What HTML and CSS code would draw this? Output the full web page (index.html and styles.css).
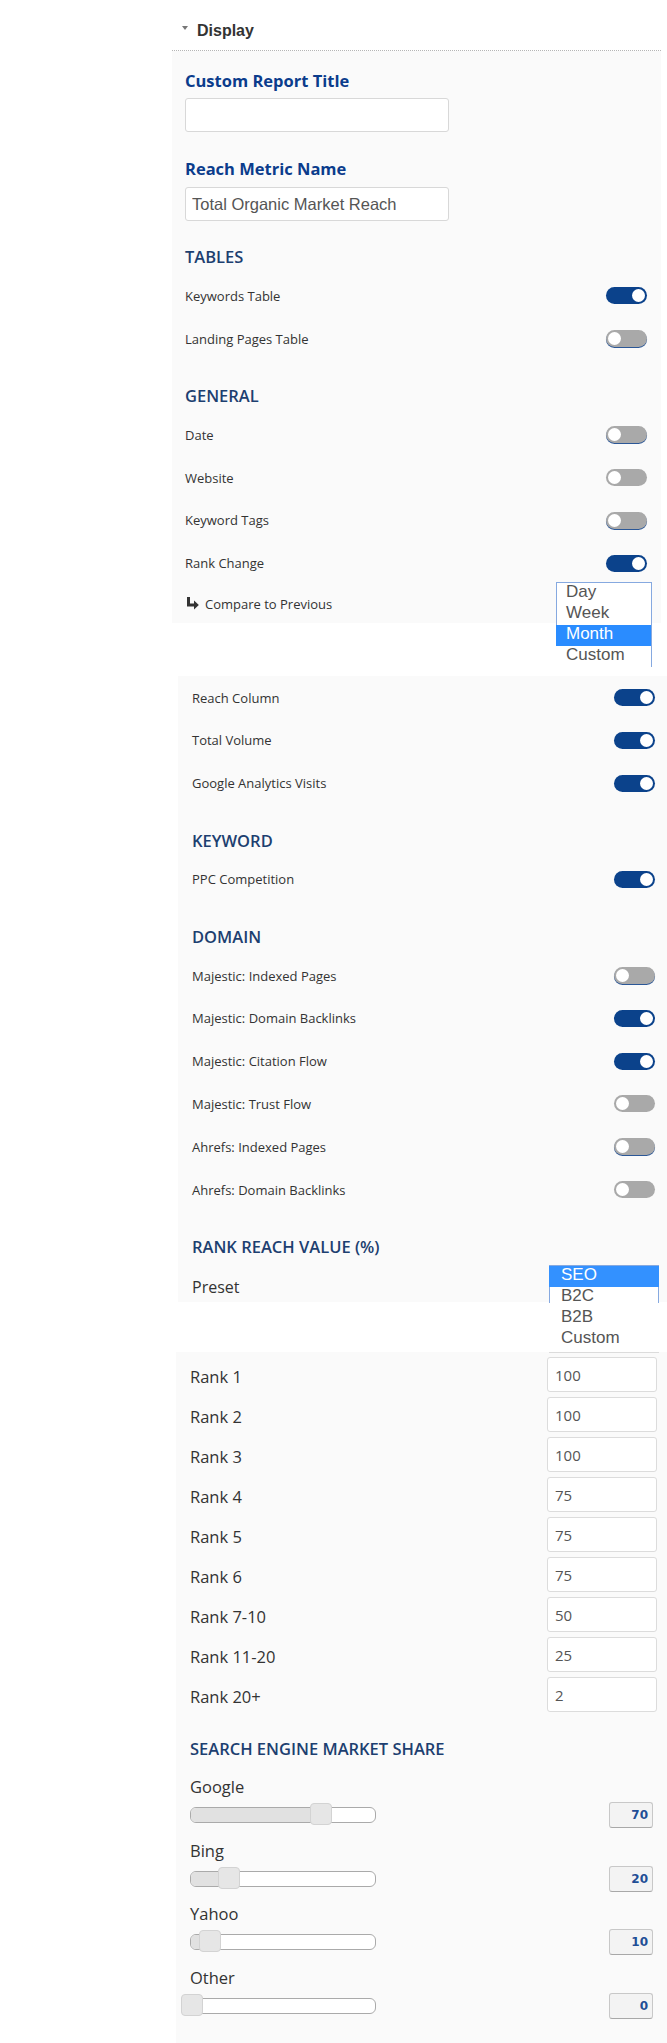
FILE: index.html
```html
<!DOCTYPE html>
<html lang="en">
<head>
  <meta charset="UTF-8">
  <title>Report Settings - Display</title>
  <meta name="viewport" content="width=device-width, initial-scale=1.0">
  <link rel="stylesheet" href="styles.css">
</head>
<body>

  <div class="display-head"><span class="caret"></span>Display</div>

  <div class="panel panel-top">
    <label class="field-label">Custom Report Title</label>
    <input class="text-input" type="text" value="">
    <label class="field-label second">Reach Metric Name</label>
    <input class="text-input" type="text" value="Total Organic Market Reach">

    <h3 class="group-title">TABLES</h3>
    <div class="opt-row"><span>Keywords Table</span><span class="toggle on"></span></div>
    <div class="opt-row"><span>Landing Pages Table</span><span class="toggle edge"></span></div>

    <h3 class="group-title">GENERAL</h3>
    <div class="opt-row"><span>Date</span><span class="toggle edge"></span></div>
    <div class="opt-row"><span>Website</span><span class="toggle"></span></div>
    <div class="opt-row"><span>Keyword Tags</span><span class="toggle edge"></span></div>
    <div class="opt-row"><span>Rank Change</span><span class="toggle on"></span></div>
    <div class="opt-row compare-row">
      <span class="sub-arrow">
        <svg width="13" height="13" viewBox="0 0 13 13">
          <path d="M2.5 0 V8 H8.5" fill="none" stroke="#333" stroke-width="3"/>
          <polygon points="8,3.5 12.8,8 8,12.5" fill="#333"/>
        </svg>
      </span>
      <span>Compare to Previous</span>
      <div class="listbox period-list">
        <div class="option">Day</div>
        <div class="option">Week</div>
        <div class="option selected">Month</div>
        <div class="option">Custom</div>
      </div>
    </div>
  </div>

  <div class="panel panel-mid">
    <div class="opt-row"><span>Reach Column</span><span class="toggle on"></span></div>
    <div class="opt-row"><span>Total Volume</span><span class="toggle on"></span></div>
    <div class="opt-row"><span>Google Analytics Visits</span><span class="toggle on"></span></div>

    <h3 class="group-title">KEYWORD</h3>
    <div class="opt-row"><span>PPC Competition</span><span class="toggle on"></span></div>

    <h3 class="group-title">DOMAIN</h3>
    <div class="opt-row"><span>Majestic: Indexed Pages</span><span class="toggle edge"></span></div>
    <div class="opt-row"><span>Majestic: Domain Backlinks</span><span class="toggle on"></span></div>
    <div class="opt-row"><span>Majestic: Citation Flow</span><span class="toggle on"></span></div>
    <div class="opt-row"><span>Majestic: Trust Flow</span><span class="toggle"></span></div>
    <div class="opt-row"><span>Ahrefs: Indexed Pages</span><span class="toggle edge"></span></div>
    <div class="opt-row"><span>Ahrefs: Domain Backlinks</span><span class="toggle"></span></div>

    <h3 class="group-title">RANK REACH VALUE (%)</h3>
    <div class="preset-row">
      <span>Preset</span>
      <div class="listbox preset-list">
        <div class="option selected">SEO</div>
        <div class="option">B2C</div>
        <div class="option">B2B</div>
        <div class="option">Custom</div>
      </div>
    </div>
  </div>

  <div class="panel panel-low">
    <div class="rank-row"><span class="rank-label">Rank 1</span><input class="rank-input" type="text" value="100"></div>
    <div class="rank-row"><span class="rank-label">Rank 2</span><input class="rank-input" type="text" value="100"></div>
    <div class="rank-row"><span class="rank-label">Rank 3</span><input class="rank-input" type="text" value="100"></div>
    <div class="rank-row"><span class="rank-label">Rank 4</span><input class="rank-input" type="text" value="75"></div>
    <div class="rank-row"><span class="rank-label">Rank 5</span><input class="rank-input" type="text" value="75"></div>
    <div class="rank-row"><span class="rank-label">Rank 6</span><input class="rank-input" type="text" value="75"></div>
    <div class="rank-row"><span class="rank-label">Rank 7-10</span><input class="rank-input" type="text" value="50"></div>
    <div class="rank-row"><span class="rank-label">Rank 11-20</span><input class="rank-input" type="text" value="25"></div>
    <div class="rank-row"><span class="rank-label">Rank 20+</span><input class="rank-input" type="text" value="2"></div>

    <h3 class="group-title share-title">SEARCH ENGINE MARKET SHARE</h3>

    <div class="share">
      <div class="share-label">Google</div>
      <div class="share-row">
        <div class="track"><div class="range" style="width:70%"></div><span class="handle" style="left:70%"></span></div>
        <div class="share-value">70</div>
      </div>
    </div>
    <div class="share">
      <div class="share-label">Bing</div>
      <div class="share-row">
        <div class="track"><div class="range" style="width:20%"></div><span class="handle" style="left:20%"></span></div>
        <div class="share-value">20</div>
      </div>
    </div>
    <div class="share">
      <div class="share-label">Yahoo</div>
      <div class="share-row">
        <div class="track"><div class="range" style="width:10%"></div><span class="handle" style="left:10%"></span></div>
        <div class="share-value">10</div>
      </div>
    </div>
    <div class="share">
      <div class="share-label">Other</div>
      <div class="share-row">
        <div class="track"><div class="range" style="width:0%"></div><span class="handle" style="left:0%"></span></div>
        <div class="share-value">0</div>
      </div>
    </div>
  </div>

</body>
</html>
```

FILE: styles.css
```css
body { margin: 0; background: #fff; font-family: "Open Sans", sans-serif; color: #333; }

.display-head {
  margin-left: 172px;
  width: 489px;
  height: 51px;
  box-sizing: border-box;
  padding: 22px 0 0 10px;
  border-bottom: 1px dotted #b5b5b5;
  font: bold 16px/18px "Liberation Sans", Arial, sans-serif;
  color: #333;
}
.caret {
  display: inline-block;
  width: 0;
  height: 0;
  border-left: 3.5px solid transparent;
  border-right: 3.5px solid transparent;
  border-top: 4px solid #777;
  margin-right: 9px;
  vertical-align: 6px;
}

.panel { background: #fafafa; box-sizing: border-box; }
.panel-top { margin-left: 172px; width: 489px; padding: 19px 14px 0 13px; }
.panel-mid { margin: 53px 0 0 178px; width: 489px; padding: 0 12px 4.5px 14px; }
.panel-low { margin: 50px 0 0 176px; width: 491px; padding: 5px 10px 25px 14px; }

.field-label {
  display: block;
  font-size: 16.5px;
  font-weight: 700;
  line-height: 22px;
  color: #0b3c8c;
  margin-bottom: 6px;
}
.field-label.second { margin-top: 26px; margin-bottom: 7px; }
.text-input {
  display: block;
  width: 264px;
  height: 34px;
  box-sizing: border-box;
  border: 1px solid #d8d8d8;
  border-radius: 3px;
  padding: 0 6px;
  background: #fff;
  font: 16.5px "Liberation Sans", Arial, sans-serif;
  color: #555;
}

.group-title {
  margin: 25px 0 6.4px;
  font-size: 16.5px;
  font-weight: 600;
  line-height: 22px;
  color: #1d3f70;
}

.opt-row {
  display: flex;
  justify-content: space-between;
  align-items: center;
  height: 42.8px;
  font-size: 13px;
  line-height: 18px;
}
.toggle {
  position: relative;
  width: 41px;
  height: 17px;
  border-radius: 9px;
  background: #a9a9a9;
}
.toggle::after {
  content: "";
  position: absolute;
  top: 2px;
  left: 2px;
  width: 13px;
  height: 13px;
  border-radius: 50%;
  background: #fff;
}
.toggle.on { background: #0b428b; }
.toggle.on::after { left: auto; right: 2px; }
.toggle.edge { box-shadow: 0 1px 0 #2b5797; }

.compare-row {
  position: relative;
  justify-content: flex-start;
  gap: 6px;
  height: 38.6px;
}
.sub-arrow { display: flex; margin-left: 1px; }

.listbox {
  position: absolute;
  z-index: 2;
  box-sizing: border-box;
  font: 17px/18px "Liberation Sans", Arial, sans-serif;
  color: #555;
}
.listbox .option { height: 21px; }
.listbox .option.selected { background: #2a8cff; color: #fff; }
.period-list {
  top: -3px;
  right: -5px;
  width: 96px;
  border-top: 1px solid #86a9e0;
  border-right: 1px solid #86a9e0;
  background: linear-gradient(#86a9e0, #86a9e0) left top / 1px 42px no-repeat, #fff;
}
.period-list .option { padding-left: 10px; }
.preset-list {
  top: -11px;
  right: -4px;
  width: 110px;
  padding-bottom: 2px;
  border-top: 1px solid #86a9e0;
  border-bottom: 1px solid #dcdcdc;
  background:
    linear-gradient(#86a9e0, #86a9e0) left top / 1px 37px no-repeat,
    linear-gradient(#86a9e0, #86a9e0) right top / 1px 37px no-repeat,
    #fff;
}
.preset-list .option { padding-left: 12px; }
.preset-list .option.selected { background: #3391ff; }

/* the title's bottom margin collapses into this one */
.preset-row {
  position: relative;
  margin-top: 17.7px;
  font-size: 16px;
  line-height: 22px;
}

.rank-row {
  display: flex;
  justify-content: space-between;
  align-items: flex-start;
  height: 35px;
}
.rank-row + .rank-row { margin-top: 5px; }
.rank-label { padding-top: 8.5px; font-size: 16.5px; line-height: 22px; }
.rank-input {
  width: 110px;
  height: 35px;
  box-sizing: border-box;
  border: 1px solid #dcdcdc;
  border-radius: 3px;
  padding: 0 7px;
  background: #fff;
  font: 15px "Open Sans", sans-serif;
  color: #555;
}

.share-title { margin: 26px 0 16px; }
.share + .share { margin-top: 11.5px; }
.share-label { font-size: 16.5px; line-height: 22px; }
.share-row {
  display: flex;
  justify-content: space-between;
  align-items: center;
  height: 26px;
  margin-top: 4px;
}
.track {
  position: relative;
  width: 186px;
  height: 16px;
  box-sizing: border-box;
  border: 1px solid #aaa;
  border-radius: 6px;
  background: #fff;
}
.range {
  position: absolute;
  left: 0;
  top: 0;
  bottom: 0;
  background: #e1e1e1;
  border-radius: 5px 0 0 5px;
}
.handle {
  position: absolute;
  top: -5px;
  width: 22px;
  height: 22px;
  box-sizing: border-box;
  margin-left: -10px;
  border: 1px solid #d3d3d3;
  border-radius: 4px;
  background: #e6e6e6;
}
.share-value {
  width: 44px;
  height: 26px;
  box-sizing: border-box;
  margin-right: 4px;
  padding-right: 4px;
  border: 1px solid #c8c8c8;
  border-bottom-color: #a8a8a8;
  border-radius: 3px;
  background: #f3f3f3;
  font: bold 12px/24px "DejaVu Sans", Verdana, sans-serif;
  color: #1f4e96;
  text-align: right;
}
```
